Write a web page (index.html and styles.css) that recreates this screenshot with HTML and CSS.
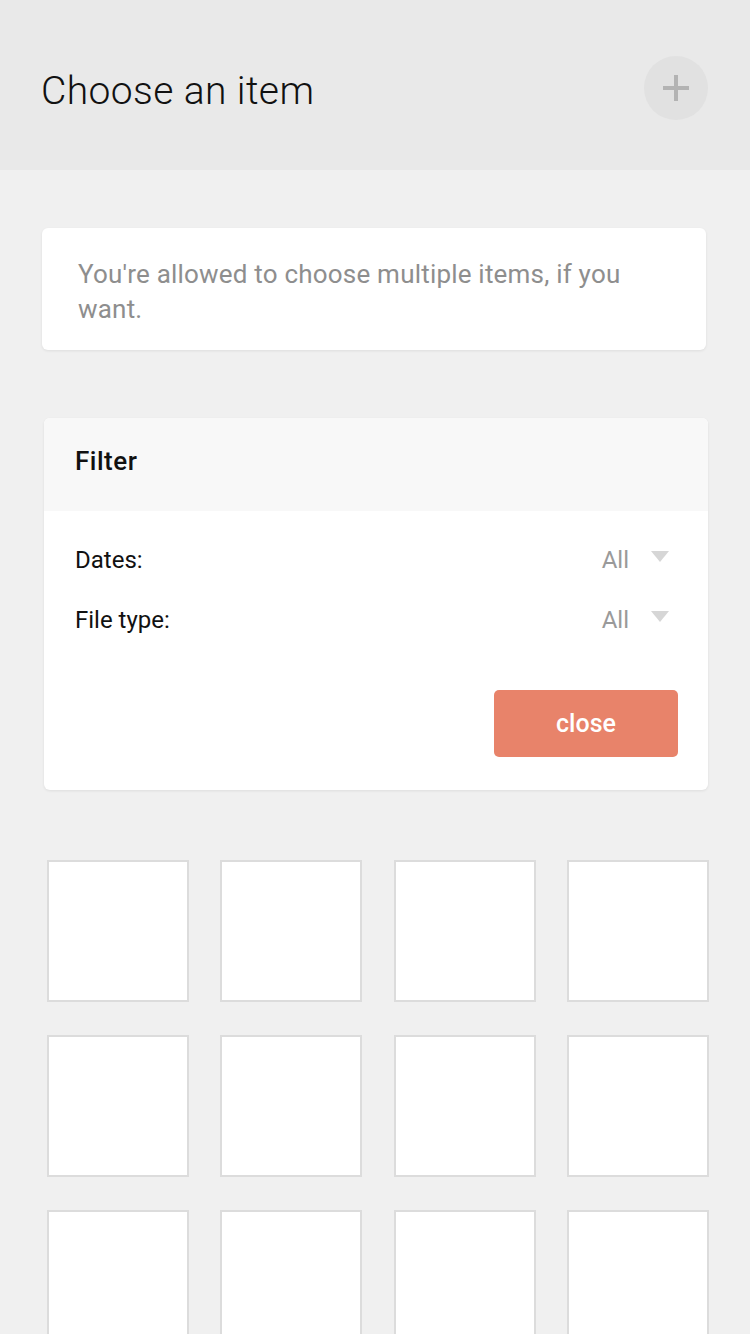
FILE: index.html
```html
<!DOCTYPE html>
<html>
<head>
<meta charset="utf-8">
<link rel="stylesheet" href="styles.css">
</head>
<body>
<header class="topbar">
  <h1 class="title">Choose an item</h1>
  <button class="add-btn" aria-label="Add">
    <svg width="26" height="26" viewBox="0 0 26 26"><rect x="0" y="11" width="26" height="4" fill="#b3b3b3"/><rect x="11" y="0" width="4" height="26" fill="#b3b3b3"/></svg>
  </button>
</header>
<main class="content">
  <div class="info-card">You're allowed to choose multiple items, if you want.</div>
  <section class="filter-card">
    <div class="filter-head">Filter</div>
    <div class="filter-body">
      <div class="filter-row"><span class="label">Dates:</span><span class="select"><span class="value">All</span><span class="caret"></span></span></div>
      <div class="filter-row"><span class="label">File type:</span><span class="select"><span class="value">All</span><span class="caret"></span></span></div>
      <div class="actions"><button class="close-btn">close</button></div>
    </div>
  </section>
  <div class="grid">
    <div class="tile"></div><div class="tile"></div><div class="tile"></div><div class="tile"></div>
    <div class="tile"></div><div class="tile"></div><div class="tile"></div><div class="tile"></div>
    <div class="tile"></div><div class="tile"></div><div class="tile"></div><div class="tile"></div>
  </div>
</main>
</body>
</html>
```
FILE: styles.css
```css
* { box-sizing: border-box; }
html, body { margin: 0; padding: 0; }
body {
  background: #f0f0f0;
  font-family: Roboto, "Liberation Sans", sans-serif;
  color: #111;
}
.topbar {
  height: 170px;
  background: #e9e9e9;
  display: flex;
  align-items: center;
  justify-content: space-between;
  padding: 6px 42px 0 41px;
}
.title {
  margin: 0;
  font-weight: 300;
  font-size: 39px;
  color: #111;
  letter-spacing: 0.4px;
  position: relative;
  top: 3px;
}
.add-btn {
  width: 64px;
  height: 64px;
  border-radius: 50%;
  background: #e1e1e1;
  border: none;
  padding: 0;
  display: flex;
  align-items: center;
  justify-content: center;
}
.content {
  padding: 58px 42px 0 42px;
}
.info-card {
  background: #fff;
  border-radius: 6px;
  box-shadow: 0 1px 3px rgba(0,0,0,0.08);
  padding: 29px 36px 23px;
  margin-right: 2px;
  font-size: 26px;
  line-height: 35px;
  letter-spacing: 0.2px;
  color: #8e8e8e;
  height: 122px;
}
.filter-card {
  margin: 68px 0 0 2px;
  background: #fff;
  border-radius: 6px;
  box-shadow: 0 1px 3px rgba(0,0,0,0.08);
  overflow: hidden;
}
.filter-head {
  height: 93px;
  background: #f8f8f8;
  padding: 0 31px 8px;
  display: flex;
  align-items: center;
  font-size: 26px;
  font-weight: 500;
  letter-spacing: 0.5px;
  color: #111;
}
.filter-body {
  padding: 19px 30px 33px 31px;
}
.filter-row {
  height: 60px;
  display: flex;
  align-items: center;
  justify-content: space-between;
  font-size: 24px;
}
.label { color: #111; }
.select {
  display: flex;
  align-items: center;
}
.value { color: #9a9a9a; }
.caret {
  width: 0; height: 0;
  border-left: 9.5px solid transparent;
  border-right: 9.5px solid transparent;
  border-top: 11px solid #d6d6d6;
  margin-left: 22px;
  margin-right: 9px;
  position: relative;
  top: -4px;
}
.actions {
  display: flex;
  justify-content: flex-end;
  margin-top: 40px;
}
.close-btn {
  width: 184px;
  height: 67px;
  border: none;
  border-radius: 5px;
  background: #e8836a;
  color: #fff;
  font-family: inherit;
  font-size: 25px;
  font-weight: 500;
}
.grid {
  margin: 70px 0 0 5px;
  display: grid;
  grid-template-columns: repeat(4, 142px);
  justify-content: space-between;
  row-gap: 33px;
  width: 662px;
}
.tile {
  height: 142px;
  background: #fff;
  border: 2px solid #dcdcdc;
}
```
